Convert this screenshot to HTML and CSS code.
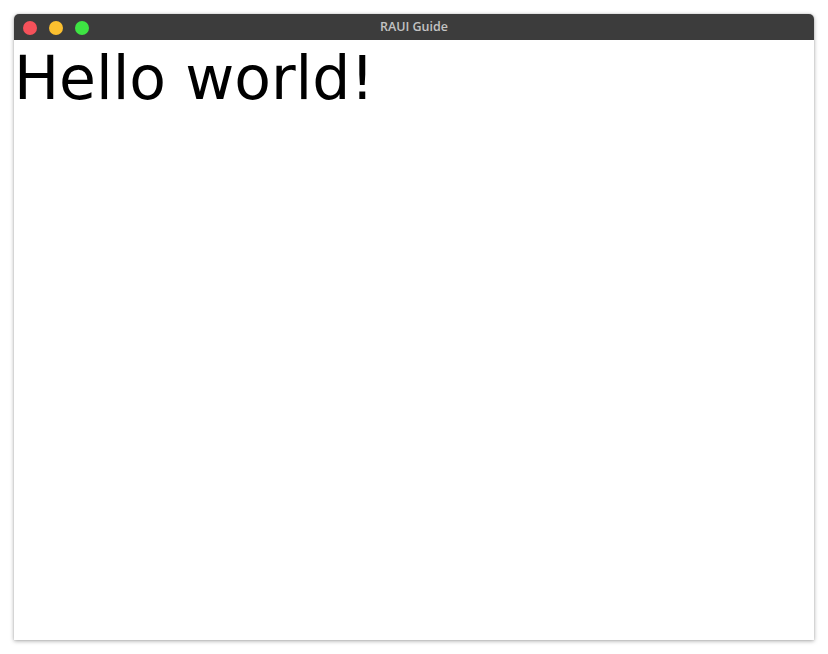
FILE: index.html
```html
<!DOCTYPE html>
<html>
<head>
<meta charset="utf-8">
<link rel="stylesheet" href="styles.css">
</head>
<body>
<div class="window">
  <div class="titlebar">
    <div class="lights">
      <span class="light red"></span>
      <span class="light yellow"></span>
      <span class="light green"></span>
    </div>
    <div class="title">RAUI Guide</div>
  </div>
  <div class="content">
    <div class="hello">Hello world!</div>
  </div>
</div>
</body>
</html>
```
FILE: styles.css
```css
html, body {
  margin: 0;
  padding: 0;
  background: #ffffff;
}
body {
  padding: 14px;
  width: 800px;
}
.window {
  width: 800px;
  border-radius: 5px 5px 0 0;
  box-shadow: 0 1px 4px rgba(0,0,0,0.35), 0 0 1px rgba(0,0,0,0.3);
  overflow: hidden;
  background: #fff;
}
.titlebar {
  height: 26px;
  background: #3c3c3c;
  display: flex;
  align-items: center;
  position: relative;
}
.lights {
  display: flex;
  gap: 12px;
  padding-left: 9px;
  padding-top: 1px;
}
.light {
  width: 14px;
  height: 14px;
  border-radius: 50%;
  display: block;
}
.red { background: #f5515a; }
.yellow { background: #fcc02f; }
.green { background: #3ee443; }
.title {
  position: absolute;
  left: 0;
  right: 0;
  top: 0;
  line-height: 26px;
  text-align: center;
  color: #c3c3c3;
  font-family: "Open Sans", "DejaVu Sans", sans-serif;
  font-weight: 600;
  font-size: 12.5px;
}
.content {
  height: 600px;
  background: #fff;
}
.hello {
  font-family: "DejaVu Sans", sans-serif;
  font-size: 60px;
  line-height: 70px;
  color: #000;
  padding-top: 3px;
}
```
